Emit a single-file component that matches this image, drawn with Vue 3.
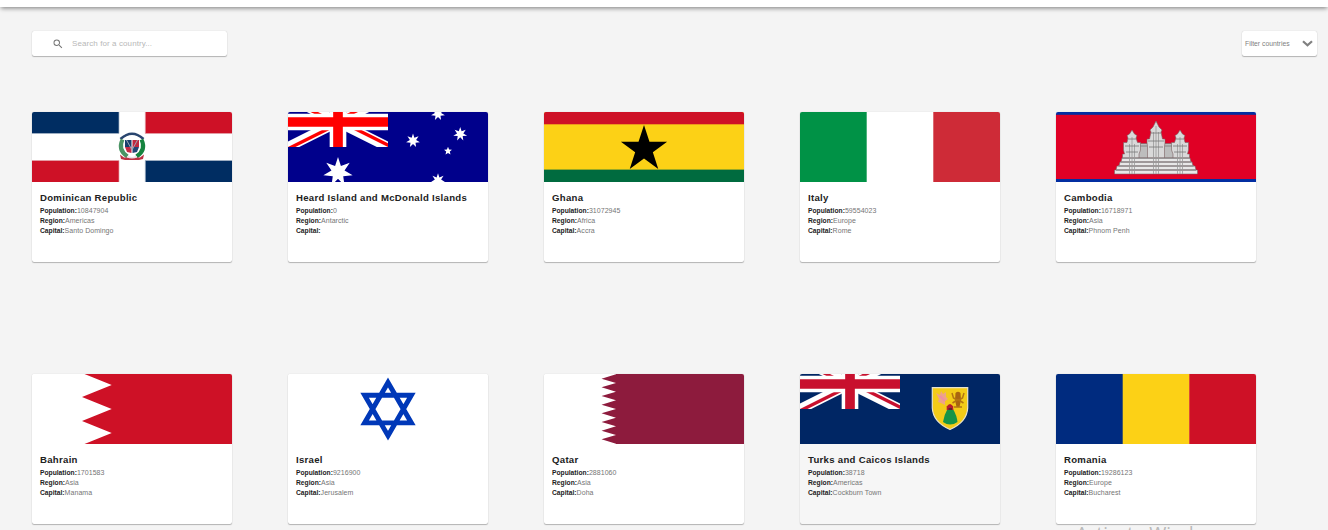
<script setup>
const star = (cx, cy, outer, inner, points) =>
  Array.from({ length: points * 2 }, (_, i) => {
    const r = i % 2 ? inner : outer
    const a = (Math.PI * i) / points - Math.PI / 2
    return `${(cx + r * Math.cos(a)).toFixed(2)},${(cy + r * Math.sin(a)).toFixed(2)}`
  }).join(' ')

const southernStars = [
  star(50, 60, 15, 6.7, 7),
  star(150, 68.3, 7.1, 3.2, 7),
  star(125, 28.7, 7.1, 3.2, 7),
  star(150, 1.7, 7.1, 3.2, 7),
  star(172.2, 22.1, 7.1, 3.2, 7),
  star(160, 39, 4.2, 1.9, 5),
]
const blackStar = star(100, 37.3, 24.3, 9.3, 5)

const serration = Array.from({ length: 8 }, (_, i) => {
  const y = 0.33 + i * 8.67
  return `L72 ${y.toFixed(2)}L57.5 ${(y + 4.33).toFixed(2)}`
}).join('')
const qatarPath = `M200 0H72${serration}L72 69.7V70H200Z`

const stripes = {
  it: ['#009246', '#ffffff', '#ce2b37'],
  ro: ['#002b7f', '#fcd116', '#ce1126'],
}

const countries = [
  { code: 'do', name: 'Dominican Republic', population: '10847904', region: 'Americas', capital: 'Santo Domingo' },
  { code: 'hm', name: 'Heard Island and McDonald Islands', population: '0', region: 'Antarctic', capital: '' },
  { code: 'gh', name: 'Ghana', population: '31072945', region: 'Africa', capital: 'Accra' },
  { code: 'it', name: 'Italy', population: '59554023', region: 'Europe', capital: 'Rome' },
  { code: 'kh', name: 'Cambodia', population: '16718971', region: 'Asia', capital: 'Phnom Penh' },
  { code: 'bh', name: 'Bahrain', population: '1701583', region: 'Asia', capital: 'Manama' },
  { code: 'il', name: 'Israel', population: '9216900', region: 'Asia', capital: 'Jerusalem' },
  { code: 'qa', name: 'Qatar', population: '2881060', region: 'Asia', capital: 'Doha' },
  { code: 'tc', name: 'Turks and Caicos Islands', population: '38718', region: 'Americas', capital: 'Cockburn Town', hovered: true },
  { code: 'ro', name: 'Romania', population: '19286123', region: 'Europe', capital: 'Bucharest' },
]
</script>

<template>
  <div class="page">
    <header class="topbar"></header>

    <div class="toolbar">
      <label class="search">
        <svg class="search-icon" viewBox="0 0 24 24">
          <path d="M15.5 14h-.79l-.28-.27A6.47 6.47 0 0 0 16 9.5 6.5 6.5 0 1 0 9.5 16c1.61 0 3.09-.59 4.23-1.57l.27.28v.79l5 4.99L20.49 19l-4.99-5zm-6 0C7.01 14 5 11.99 5 9.5S7.01 5 9.5 5 14 7.01 14 9.5 11.99 14 9.5 14z" />
        </svg>
        <input class="search-input" type="text" placeholder="Search for a country..." />
      </label>
      <button class="filter" type="button">
        <span>Filter countries</span>
        <svg class="chevron" viewBox="0 0 11 7"><path d="M1 1.200L5.500 5.300L10 1.200" /></svg>
      </button>
    </div>

    <main class="grid">
      <article v-for="c in countries" :key="c.code" class="card" :class="{ hovered: c.hovered }">
        <svg class="flag" viewBox="0 0 200 70">
          <g v-if="c.code === 'do'">
            <rect width="200" height="70" fill="#fff" />
            <path d="M0 0H87V21.5H0ZM113.3 48.5H200V70H113.3Z" fill="#002d62" />
            <path d="M113.3 0H200V21.5H113.3ZM0 48.5H87V70H0Z" fill="#ce1126" />
            <path d="M0 21.500H87V0M113.300 70V48.500H200" fill="none" stroke="#a9b7c9" stroke-width=".7" />
            <path d="M200 21.500H113.300V0M87 70V48.500H0" fill="none" stroke="#e2a4ab" stroke-width=".7" />
            <path d="M88.500 27Q100 16.500 111.500 27" fill="none" stroke="#29456f" stroke-width="2.600" />
            <path d="M90.500 27.500Q85.500 38 95.500 44.500" fill="none" stroke="#4a9464" stroke-width="4" />
            <path d="M109.500 27.500Q114.500 38 104.500 44.500" fill="none" stroke="#16833f" stroke-width="4" />
            <path d="M93 28H99.500V35H93Z" fill="#173e6c" />
            <path d="M100.500 28H107V35H100.500Z" fill="#be2941" />
            <path d="M93 35H99.500V41L95 40Z" fill="#c52a45" />
            <path d="M100.500 35H107L105 40L100.500 41Z" fill="#244675" />
            <path d="M94.500 28L100 38L105.500 28" fill="none" stroke="#9ca5b4" stroke-width="1" />
            <path d="M88 42.500L92 45.500H108L112 42.500L111 47L107 48H93L89 47Z" fill="#bd3042" />
            <path d="M95 44.500Q100 47 105 44.500" fill="none" stroke="#e8e1e4" stroke-width="1.500" />
          </g>

          <g v-else-if="c.code === 'hm' || c.code === 'tc'">
            <rect width="200" height="70" :fill="c.code === 'hm' ? '#00008b' : '#002664'" />
            <svg x="0" y="-15" width="100" height="50" viewBox="0 0 60 30">
              <clipPath :id="`saltire-${c.code}`">
                <path d="M30 15H60V30ZM30 15V30H0ZM30 15H0V0ZM30 15V0H60Z" />
              </clipPath>
              <path d="M0 0L60 30M60 0L0 30" stroke="#fff" stroke-width="6" />
              <path d="M0 0L60 30M60 0L0 30" :stroke="c.code === 'hm' ? '#ff0000' : '#c8102e'" stroke-width="4" :clip-path="`url(#saltire-${c.code})`" />
              <path d="M30 0V30M0 15H60" stroke="#fff" stroke-width="10" />
              <path d="M30 0V30M0 15H60" :stroke="c.code === 'hm' ? '#ff0000' : '#c8102e'" stroke-width="5.800" />
            </svg>
            <g v-if="c.code === 'hm'" fill="#fff">
              <polygon v-for="s in southernStars" :key="s" :points="s" />
            </g>
            <g v-else>
              <path d="M132.300 13.700H167.700V34Q167 48 150 55.500Q133 48 132.300 34Z" fill="#f3cb18" stroke="#e6e1cc" stroke-width="1.200" />
              <path d="M136 19L140 21L141 17L143 20L146 18L146 23L148 25L145 27V31L141 29L138 28L139 25Z" fill="#eda487" />
              <path d="M140 22L145 27" stroke="#ee8fa5" stroke-width="2" />
              <path d="M155.500 19Q158 16.500 160.500 19L161 26L159.500 33H156.500L155 26Z" fill="#a96510" />
              <path d="M152 19L153.500 24L157 26M164 19L162.500 24L159 26M152.500 29L158 25.500L163.500 29M154 33H162" fill="none" stroke="#b37512" stroke-width="1.500" />
              <path d="M147.500 35H153Q157 42 157.500 48Q150 53 143 48Q144 41 147.500 35Z" fill="#169447" />
              <path d="M146.700 36V32.500Q150 27.500 153.200 32.500V36Z" fill="#b51f2c" />
              <path d="M148.500 34H152V36H148.500Z" fill="#552b2d" />
            </g>
          </g>

          <g v-else-if="c.code === 'gh'">
            <rect width="200" height="70" fill="#fcd116" />
            <rect width="200" height="12.300" fill="#ce1126" />
            <rect y="57.600" width="200" height="12.400" fill="#006b3f" />
            <polygon :points="blackStar" fill="#000" />
          </g>

          <g v-else-if="stripes[c.code]">
            <rect width="67" height="70" :fill="stripes[c.code][0]" />
            <rect x="66.700" width="67" height="70" :fill="stripes[c.code][1]" />
            <rect x="133.300" width="66.700" height="70" :fill="stripes[c.code][2]" />
          </g>

          <g v-else-if="c.code === 'kh'">
            <rect width="200" height="70" fill="#032ea1" />
            <rect y="2.800" width="200" height="64.200" fill="#e00025" />
            <g fill="#d9d9d9" stroke="#7b5f62" stroke-width=".6">
              <path d="M81 31.500H119V46H81Z" fill="#bdbdbd" />
              <path d="M66.500 46V42H68.500L67.500 38V30.500H71L72 26L71 23.500L73.500 22L76 18L78.500 22L81 23.500L80 26L81.500 30.500H84.500V38L83 42V46Z" />
              <path d="M117 46V42L115.500 38V30.500H118.500L120 26L119 23.500L121.500 22L124 18L126.500 22L129 23.500L128 26L129 30.500H132.500V38L131.500 42H133.500V46Z" />
              <path d="M91.500 46V34L91 31V27H93.500L95 20L94 18L97 15L100 9L103 15L106 18L105 20L106.500 27H109V31L108.500 34V46Z" />
              <path d="M66 46H134L135 50H65ZM64 50H136L137 54H63ZM61 54H139L140 58H60ZM58.500 58H141.500V62H58.500Z" fill="#e8e8e8" />
            </g>
            <path d="M66 46.300H134M64.500 50H135.500M62 54H138M60 58H140" stroke="#8e8e8e" stroke-width="1" />
            <path d="M73.500 32V62M76 25V62M78.500 32V62M97.500 20V62M100 14V62M102.500 20V62M121.500 32V62M124 25V62M126.500 32V62" stroke="#999" stroke-width=".8" />
            <path d="M69 34H83M70 40H82M72 27H80M92 29H108M93 35H107M95 21H105M117 34H131M118 40H130M120 27H128M84 34H91M109 34H116" stroke="#777" stroke-width=".8" />
          </g>

          <g v-else-if="c.code === 'bh'">
            <rect width="200" height="70" fill="#fff" />
            <path d="M200 0H52.500L79.700 11L50 23L79.700 35L50 47L79.700 59L52.500 70H200Z" fill="#ce1126" />
          </g>

          <g v-else-if="c.code === 'il'">
            <rect width="200" height="70" fill="#fff" />
            <path d="M100 8.400L123.400 48.900H76.600ZM100 61.700L123.400 21.200H76.600Z" fill="none" stroke="#0038b8" stroke-width="4.900" />
          </g>

          <g v-else>
            <rect width="200" height="70" fill="#fff" />
            <path :d="qatarPath" fill="#8d1b3d" />
          </g>
        </svg>
        <div class="details">
          <h2>{{ c.name }}</h2>
          <p><b>Population:</b>{{ c.population }}</p>
          <p><b>Region:</b>{{ c.region }}</p>
          <p><b>Capital:</b>{{ c.capital }}</p>
        </div>
      </article>
    </main>

    <div class="watermark">Activate Windows</div>
  </div>
</template>

<style>
body {
  margin: 0;
  overflow: hidden;
}
</style>

<style scoped>
.page {
  position: relative;
  width: 1328px;
  height: 530px;
  overflow: hidden;
  background: #f4f4f4;
  font-family: "Liberation Sans", Arial, sans-serif;
}
.topbar {
  height: 7px;
  background: #fff;
  box-shadow: 0 2px 4px -1px rgba(0, 0, 0, 0.45), 0 3px 5px rgba(0, 0, 0, 0.06);
}
.toolbar {
  display: flex;
  justify-content: space-between;
  align-items: center;
  height: 25px;
  padding: 24px 11px 0 32px;
}
.search,
.filter,
.card {
  background: #fff;
  border-radius: 2px;
  box-shadow: 0 1px 1px rgba(0, 0, 0, 0.25), 0 0 1px rgba(0, 0, 0, 0.22);
}
.search {
  box-sizing: border-box;
  display: flex;
  align-items: center;
  width: 195px;
  height: 25px;
  padding-left: 20px;
}
.search-icon {
  width: 12px;
  height: 12px;
  fill: #757575;
}
.search-input {
  width: 130px;
  height: 20px;
  margin-left: 8px;
  padding: 0;
  border: 0;
  outline: 0;
  background: transparent;
  font: 8px "Liberation Sans", Arial, sans-serif;
  letter-spacing: 0.09px;
}
.search-input::placeholder {
  color: #b8b8b8;
  opacity: 1;
}
.filter {
  display: flex;
  align-items: center;
  justify-content: space-between;
  width: 75px;
  height: 25px;
  padding: 0 4px 0 3px;
  border: 0;
  color: #808080;
  font: 6.8px "Liberation Sans", Arial, sans-serif;
}
.chevron {
  width: 11px;
  height: 7px;
  fill: none;
  stroke: #808080;
  stroke-width: 2.2;
}
.grid {
  display: grid;
  grid-template-columns: repeat(5, 200px);
  gap: 112px 56px;
  padding: 56px 0 0 32px;
}
.card {
  height: 150px;
  overflow: hidden;
}
.card.hovered {
  background: #f6f6f6;
}
.flag {
  display: block;
  width: 200px;
  height: 70px;
}
.details {
  padding: 8px;
  white-space: nowrap;
}
h2 {
  margin: 0 0 1px;
  color: #212121;
  font-size: 9.6px;
  font-weight: 700;
  line-height: 15px;
  letter-spacing: 0.29px;
}
p {
  margin: 0;
  color: #757575;
  font-size: 7px;
  line-height: 10px;
  letter-spacing: 0.05px;
}
b {
  color: #212121;
  font-size: 6.7px;
  letter-spacing: 0.01px;
}
.watermark {
  position: absolute;
  left: 1076px;
  top: 519px;
  color: #b9b9b9;
  font: 18.5px/28px "Open Sans", "Noto Sans", sans-serif;
  white-space: nowrap;
}
</style>
